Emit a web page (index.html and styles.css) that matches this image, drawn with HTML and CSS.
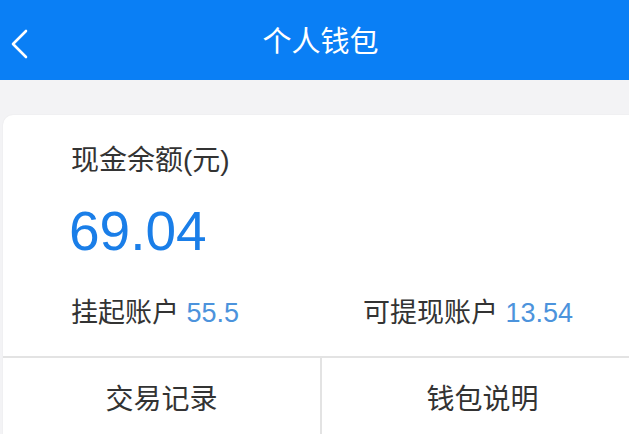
FILE: index.html
```html
<!DOCTYPE html>
<html lang="zh-CN">
<head>
  <meta charset="UTF-8" />
  <meta name="viewport" content="width=device-width, initial-scale=1.0"/>
  <title>个人钱包</title>
  <link rel="stylesheet" href="styles.css">
</head>
<body>
  <header class="topbar">
    <a href="#" class="voltar">
      <svg width="20" height="32" viewBox="0 0 20 32">
        <path d="M17 3 L4 16 L17 29" fill="none" stroke="#fff" stroke-width="2.6" stroke-linecap="round" stroke-linejoin="round"/>
      </svg>
    </a>
    <h1>个人钱包</h1>
  </header>

  <div class="carteira">
    <div class="saldo-titulo">现金余额(元)</div>
    <div class="saldo-valor">69.04</div>
    <div class="contas">
      <div>挂起账户 <span class="valor">55.5</span></div>
      <div>可提现账户 <span class="valor">13.54</span></div>
    </div>
    <div class="acoes">
      <a href="#">交易记录</a>
      <a href="#">钱包说明</a>
    </div>
  </div>
</body>
</html>
```

FILE: styles.css
```css
body {
  font-family: 'Liberation Sans', 'Noto Sans CJK SC', sans-serif;
  background: #f3f3f5;
  margin: 0;
  height: 434px;
  overflow: hidden;
  color: #333;
}
.topbar {
  position: relative;
  height: 80px;
  background-color: #0a7ff5;
  display: flex;
  align-items: center;
  justify-content: center;
  padding-left: 12px;
}
.topbar h1 {
  margin: 0;
  font-family: 'Noto Sans CJK SC', sans-serif;
  font-size: 29px;
  font-weight: normal;
  color: #fff;
  margin-top: -2px;
}
.voltar {
  position: absolute;
  left: 9px;
  top: 28px;
  display: block;
  line-height: 0;
}
.carteira {
  margin: 35px 0 0 3px;
  width: 640px;
  background: #fff;
  border-radius: 10px 0 0 0;
  box-shadow: 0 0 2px rgba(0, 0, 0, 0.06);
}
.saldo-titulo {
  padding: 29px 0 0 68px;
  font-size: 28px;
  line-height: 34px;
  color: #333;
}
.saldo-valor {
  padding-left: 66px;
  margin-top: 23px;
  font-size: 55px;
  line-height: 60px;
  color: #1a7ee8;
}
.contas {
  display: grid;
  grid-template-columns: 292px 1fr;
  padding: 35px 0 0 68px;
  height: 60px;
  font-size: 27px;
  line-height: 34px;
  border-bottom: 2px solid #e3e3e3;
}
.contas .valor {
  font-family: 'Liberation Sans', sans-serif;
  color: #4c93dc;
}
.acoes {
  display: grid;
  grid-template-columns: 319px 1fr;
  height: 90px;
}
.acoes a {
  display: block;
  text-align: center;
  padding-top: 24px;
  font-size: 28px;
  line-height: 36px;
  color: #333;
  text-decoration: none;
}
.acoes a:first-child {
  border-right: 2px solid #e3e3e3;
}
```
